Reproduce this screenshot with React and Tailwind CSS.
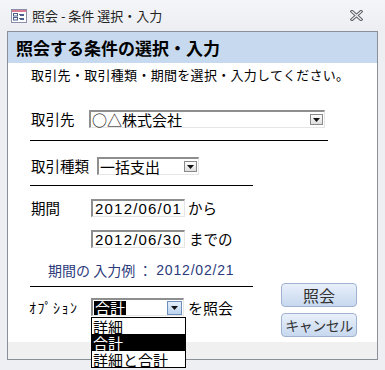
import React from "react";

const JP = { fontFamily: '"Noto Sans CJK JP", "Noto Sans", sans-serif' };
const NUM = { fontFamily: '"Liberation Sans", Arial, sans-serif' };

const FormIcon = () => (
  <svg width="16" height="14" viewBox="0 0 16 14">
    <rect x="0.5" y="0.5" width="15" height="13" fill="#fff" stroke="#8a8ea8" />
    <rect x="1" y="1" width="14" height="2" fill="#d77a92" />
    <rect x="2.5" y="4.5" width="4" height="2.5" fill="none" stroke="#4b5f8a" />
    <rect x="2.5" y="8.5" width="4" height="2.5" fill="none" stroke="#4b5f8a" />
    <path d="M8 5.5h5M8 9.5h5" stroke="#4b5f8a" />
    <path d="M9 6.5h4M9 10.5h4" stroke="#4b5f8a" />
  </svg>
);

const CloseIcon = () => (
  <svg width="13" height="11" viewBox="0 0 13 11">
    <path d="M2 1.5l9 8M11 1.5l-9 8" stroke="#5c5f66" strokeWidth="3.2" strokeLinecap="square" />
    <path d="M2 1.5l9 8M11 1.5l-9 8" stroke="#f4f5f7" strokeWidth="1.2" strokeLinecap="square" />
  </svg>
);

const Arrow = ({ blue }) => (
  <div
    className={
      blue
        ? "flex h-[14px] w-[15px] items-center justify-center border border-[#6f8fbc] bg-gradient-to-b from-[#e3eefb] to-[#bcd3ee]"
        : "flex h-[11px] w-[13px] items-center justify-center border border-[#8a8a8a] bg-gradient-to-b from-[#fdfdfd] to-[#dedede]"
    }
  >
    <svg width="7" height="4" viewBox="0 0 7 4">
      <path d="M0 0h7L3.5 4z" fill="#111" />
    </svg>
  </div>
);

const Combo = ({ width, text, blue, children }) => (
  <div
    className={`relative flex h-[18px] items-center justify-between border-t-2 border-l-2 border-b border-r border-t-[#8e8e8e] border-l-[#8e8e8e] border-b-[#e6e6e6] border-r-[#e6e6e6] bg-white pl-[1px] pr-[1px] ${width}`}
  >
    {text}
    <Arrow blue={blue} />
    {children}
  </div>
);

const DateBox = ({ value }) => (
  <div
    className="flex h-[18px] w-[94px] items-center border-t-2 border-l-2 border-b border-r border-t-[#8e8e8e] border-l-[#8e8e8e] border-b-[#e6e6e6] border-r-[#e6e6e6] bg-white pl-[2px] text-[15px] leading-none tracking-[1.2px] text-black"
    style={NUM}
  >
    {value}
  </div>
);

const Btn = ({ label, size }) => (
  <button
    className={`flex h-[24px] w-[76px] items-center justify-center whitespace-nowrap rounded-[4px] border border-[#9fb2cf] bg-gradient-to-b from-[#e9f0fa] to-[#c7d8ef] leading-none text-[#333] ${size}`}
  >
    {label}
  </button>
);

const OPTIONS = ["詳細", "合計", "詳細と合計"];

export default function App() {
  return (
    <div className="h-[370px] w-[385px] overflow-hidden bg-[#edeff3] text-black" style={JP}>
      <div className="flex h-[31px] items-center bg-gradient-to-b from-[#f4f5f8] to-[#eceef2] pl-[11px] pr-[22px]">
        <FormIcon />
        <span className="ml-[5px] text-[13px] leading-none text-[#222]">照会 - 条件 選択・入力</span>
        <div className="ml-auto">
          <CloseIcon />
        </div>
      </div>

      <div className="ml-[7px] flex h-[329px] w-[371px] flex-col border border-[#8b8f97]">
        <div className="flex h-[31px] items-center bg-[#c7d9ef] pl-[8px] text-[17px] font-bold leading-none">
          照会する条件の選択・入力
        </div>

        <div className="flex h-[279px] flex-col bg-white pl-[23px] pr-[20px]">
          <div className="mt-[4px] text-[13px] leading-[16px] tracking-[0.3px]">取引先・取引種類・期間を選択・入力してください。</div>

          <div className="mt-[27px] flex items-center">
            <span className="w-[58px] text-[14.5px] leading-none">取引先</span>
            <Combo width="w-[236px]" text={<span className="text-[15px] leading-none">○△株式会社</span>} />
          </div>
          <div className="-ml-px mt-[12px] h-px w-[298px] bg-black" />

          <div className="mt-[16px] flex items-center">
            <span className="w-[66px] text-[14.5px] leading-none">取引種類</span>
            <Combo width="w-[102px]" text={<span className="text-[15px] leading-none">一括支出</span>} />
          </div>
          <div className="-ml-px mt-[10px] h-px w-[223px] bg-black" />

          <div className="mt-[13px] flex items-center">
            <span className="w-[60px] text-[14.5px] leading-none">期間</span>
            <DateBox value="2012/06/01" />
            <span className="ml-[3px] text-[14.5px] leading-none">から</span>
          </div>
          <div className="mt-[13px] flex items-center pl-[60px]">
            <DateBox value="2012/06/30" />
            <span className="ml-[4px] text-[14.5px] leading-none">までの</span>
          </div>

          <div className="ml-[17px] mt-[14px] flex items-center text-[14px] leading-[16px] text-[#2c3a7c]">
            <span>期間の 入力例 ：</span>
            <span className="ml-[4px] text-[14px] tracking-[0.8px]" style={NUM}>2012/02/21</span>
          </div>

          <div className="flex items-start justify-between">
            <div className="flex flex-col pt-[8px]">
              <div className="-ml-px h-px w-[223px] bg-black" />
              <div className="mt-[11px] flex items-center">
                <span className="-ml-[2px] w-[62px] text-[14px] leading-none tracking-[1.5px]">ｵﾌﾟｼｮﾝ</span>
                <Combo
                  width="w-[93px]"
                  blue
                  text={<span className="bg-black px-[1px] text-[15px] leading-[14px] text-white">合計</span>}
                >
                  <div className="absolute left-[-2px] top-[17px] z-10 flex w-[95px] flex-col border border-black bg-white text-[15px]">
                    {OPTIONS.map((o) => (
                      <div
                        key={o}
                        className={
                          o === "合計"
                            ? "flex h-[17px] items-center bg-black pl-[1px] leading-none text-white"
                            : "flex h-[16px] items-center pl-[1px] leading-none"
                        }
                      >
                        {o}
                      </div>
                    ))}
                  </div>
                </Combo>
                <span className="ml-[4px] text-[15px] leading-none">を照会</span>
              </div>
            </div>
            <div className="mt-[5px] flex flex-col gap-[6px]">
              <Btn label="照会" size="text-[16px]" />
              <Btn label="キャンセル" size="text-[14px] tracking-[-0.5px]" />
            </div>
          </div>
        </div>

        <div className="h-[17px] bg-[#f0f0f0]" />
      </div>
    </div>
  );
}
